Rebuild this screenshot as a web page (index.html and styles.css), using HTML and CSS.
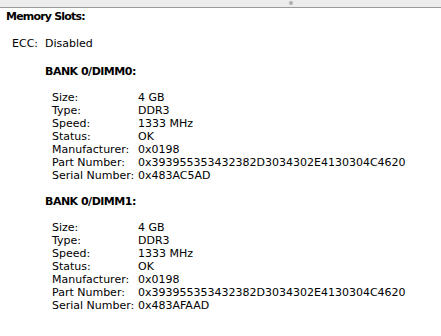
FILE: index.html
```html
<!DOCTYPE html>
<html>
<head>
<meta charset="utf-8">
<link rel="stylesheet" href="styles.css">
</head>
<body>
<div class="topbar"><span class="grip"></span></div>
<div class="content">
  <div class="title">Memory Slots:</div>
  <div class="ecc"><span class="ecc-label">ECC:</span><span>Disabled</span></div>
  <div class="bank">
    <div class="bank-title">BANK 0/DIMM0:</div>
    <dl class="props">
      <dt>Size:</dt><dd>4 GB</dd>
      <dt>Type:</dt><dd>DDR3</dd>
      <dt>Speed:</dt><dd>1333 MHz</dd>
      <dt>Status:</dt><dd>OK</dd>
      <dt>Manufacturer:</dt><dd>0x0198</dd>
      <dt>Part Number:</dt><dd>0x393955353432382D3034302E4130304C4620</dd>
      <dt>Serial Number:</dt><dd>0x483AC5AD</dd>
    </dl>
  </div>
  <div class="bank">
    <div class="bank-title">BANK 0/DIMM1:</div>
    <dl class="props">
      <dt>Size:</dt><dd>4 GB</dd>
      <dt>Type:</dt><dd>DDR3</dd>
      <dt>Speed:</dt><dd>1333 MHz</dd>
      <dt>Status:</dt><dd>OK</dd>
      <dt>Manufacturer:</dt><dd>0x0198</dd>
      <dt>Part Number:</dt><dd>0x393955353432382D3034302E4130304C4620</dd>
      <dt>Serial Number:</dt><dd>0x483AFAAD</dd>
    </dl>
  </div>
</div>
</body>
</html>
```
FILE: styles.css
```css
html, body {
  margin: 0;
  padding: 0;
  background: #ffffff;
}
body {
  font-family: "DejaVu Sans", "Liberation Sans", sans-serif;
  font-size: 11px;
  line-height: 13px;
  color: #000;
}
.topbar {
  height: 7px;
  background: #ececec;
  border-bottom: 1px solid #9a9a9a;
  position: relative;
}
.grip {
  position: absolute;
  left: 289px;
  top: 1px;
  width: 4px;
  height: 4px;
  border-radius: 50%;
  background: #b0b0b0;
}
.content {
  padding: 2px 0 0 6px;
}
.title {
  font-weight: bold;
  letter-spacing: -0.8px;
}
.ecc {
  display: flex;
  margin-top: 14px;
  padding-left: 6px;
}
.ecc-label {
  width: 33px;
}
.bank {
  padding-left: 39px;
  margin-top: 15px;
}
.bank + .bank {
  margin-top: 13px;
}
.bank-title {
  font-weight: bold;
  letter-spacing: -0.5px;
}
.props {
  display: grid;
  grid-template-columns: 86px auto;
  margin: 13px 0 0 7px;
}
.props dt, .props dd {
  margin: 0;
  white-space: nowrap;
}
```
